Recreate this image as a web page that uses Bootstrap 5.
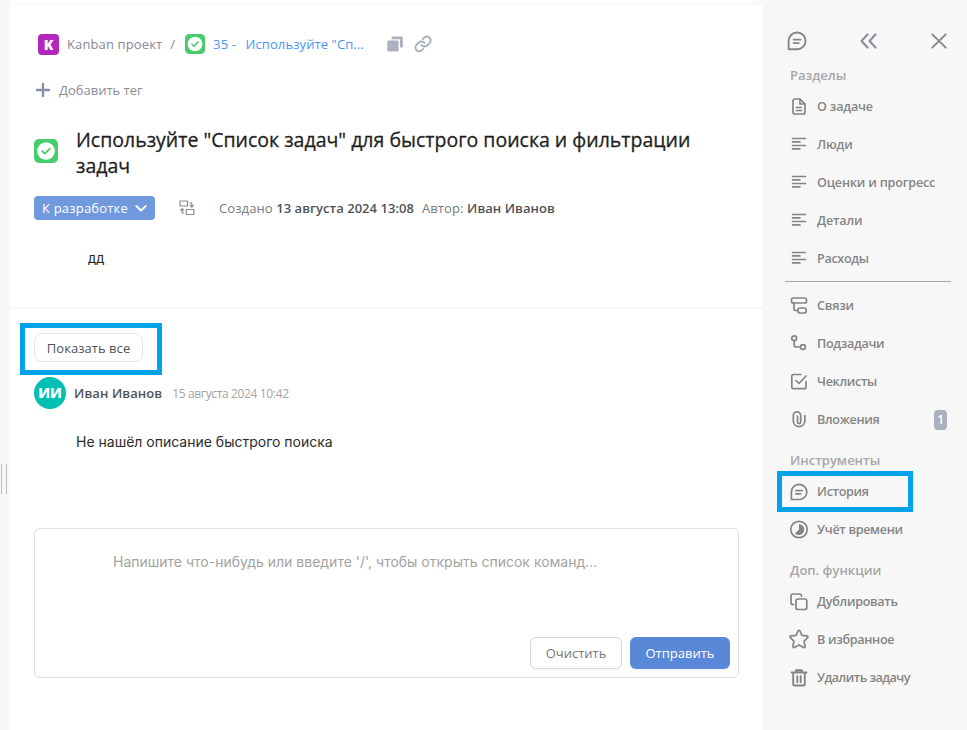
<!DOCTYPE html>
<html lang="ru">
<head>
<meta charset="utf-8">
<meta name="viewport" content="width=device-width, initial-scale=1">
<title>Задача 35</title>
<link href="https://cdn.jsdelivr.net/npm/bootstrap@5.3.0/dist/css/bootstrap.min.css" rel="stylesheet">
<style>
body{background:#f7f7f7;font-family:"Open Sans","Noto Sans",sans-serif;font-size:13px;line-height:20px;color:#8a8c94;height:730px;overflow:hidden}
svg{display:block;flex:none;fill:none;stroke:currentColor;stroke-linecap:round;stroke-linejoin:round}
.app-shell{width:967px;height:730px}
.gutter{width:10px;padding-top:464px;padding-left:1px}
.grip{width:6px;height:30px;border-left:1px solid #bdbdbd;border-right:1px solid #bdbdbd}
.main-col{width:753px}
.top-sliver{height:4px;background:#fff;margin-bottom:1px;width:743px}
.task-pane{height:302px;background:#fff;border-radius:4px;padding:28px 24px 0;margin-bottom:2px}
.feed-pane{height:421px;background:#fff;border-radius:4px 4px 0 0;padding:24px 24px 0}
.crumbs{height:22px;padding-left:4px;color:#85899a}
.proj-badge{width:21px;height:21px;border-radius:4px;background:#b327bd;color:#fff;font:800 14px/21px "Open Sans",sans-serif}
.crumb-proj{letter-spacing:.12px}
.crumb-sep{padding:0 10px 0 8px}
.crumbs a{color:#4a95f7;letter-spacing:.21px}
.crumb-name{margin-left:2px;letter-spacing:.1px}
.ic-pale{color:#abb1bf}
.ic-slate{color:#8a8ea6}
.ic-grey{color:#8c8c8c}
.ic-copy{margin-left:23px}
.ic-link{margin-left:11px}
.add-tag{margin-top:24px;height:22px}
.add-tag span{margin-left:7px}
.title-row{margin-top:25px;height:53px}
.title-row svg{margin-top:-4px}
.task-title{font-size:19.5px;line-height:26px;font-weight:500;color:#1f1f1f;width:640px;margin-left:18px;-webkit-text-stroke:.3px #1f1f1f}
.meta-row{margin-top:17px;height:24px;color:#777a80}
.meta-row b{color:#505258;font-weight:600;letter-spacing:.04px}
.made{letter-spacing:.1px}
.status-btn{width:121px;height:24px;background:#7199de;color:#fff;border-radius:4px;font-size:13px;padding:0 8px;letter-spacing:.2px}
.body-text{margin:28px 0 0 54px;color:#222;font-family:Inter,sans-serif}
.show-btn{width:109px;height:29px;border:1px solid #e6e6e6;border-radius:8px;background:#fff;color:#4f5157;font-size:13px;letter-spacing:.05px}
.author-row{margin-top:15px}
.ava{width:32px;height:32px;background:#00bfb3;color:#fff;font-weight:800;font-size:14px}
.author-name{color:#505258;font-weight:600;font-size:13px;letter-spacing:.09px}
.stamp{color:#a3a3a3;font-size:12px;letter-spacing:-.36px;margin-left:10px;padding-top:1px}
.comment-text{font:14px/20px Inter,sans-serif;color:#2b2b2b;margin:23px 0 0 42px}
.editor{margin-top:76px;width:705px;height:150px;border:1px solid #dfdfdf;border-radius:6px;padding:23px 8px 8px}
.hint{font:14px/20px Inter,sans-serif;color:#a3a3a3;padding-left:70px}
.btn-clear,.btn-send{height:32px;border-radius:6px;font-size:13px;padding:1px 0 0;box-shadow:0 2px 0 #f5f7fa}
.btn-clear{width:92px;border:1px solid #d9d9d9;background:#fff;color:#77787d}
.btn-send{width:100px;background:#5a88d8;color:#fff}
.side-col{width:204px;color:#858585}
.side-head{height:28px;margin-top:27px;padding:0 19px 0 23px}
.ic-fold{margin-left:-1px}
.side-title{height:34px;padding:10px 0 0 27px;font-weight:600;color:#a6a6a6;font-size:13px}
.side-title.first-title{height:32px;padding-top:8px}
.side-item{height:38px;padding:2px 0 0 26px;font-weight:600;font-size:12.6px;letter-spacing:-.18px}
.last-item{padding-bottom:1px}
.side-item svg{width:20px;height:20px;margin-right:8px;stroke-width:1.7}
.tight{letter-spacing:-.53px}
.snug{letter-spacing:-.32px}
.side-rule{margin:4px 16px 4px 22px;height:1px;background:#a6a6a6}
.cnt{width:13px;height:20px;border-radius:4px;background:#abb1bf;color:#fff;margin-right:20px;font-size:12px}
.hl{border:5px solid #00a2e8;pointer-events:none}
.hl-show{left:-14px;top:-10px;width:142px;height:52px}
.hl-hist{left:14px;top:-1px;width:136px;height:41px}
</style>
</head>
<body>
<svg width="0" height="0" class="position-absolute">
<symbol id="i-chat" viewBox="0 0 20 20"><path d="M2.400 17.500V10A7.700 7.600 0 1 1 10 17.500ZM7 8.700h6.200M7 11.900h4.600"/></symbol>
<symbol id="i-lines" viewBox="0 0 20 20"><path d="M3.600 3.500h12.800M3.600 6.900h7.300M3.600 10.500h12.800M3.600 13.900h7.300"/></symbol>
<symbol id="i-done" viewBox="0 0 24 24"><rect width="24" height="24" rx="5" fill="#46cd6b" stroke="none"/><circle cx="12" cy="12" r="8.800" fill="#fff" stroke="none"/><path d="M8.200 12.200l2.600 2.500 5-5" stroke="#46cd6b" stroke-width="1.800"/></symbol>
</svg>
<div class="app-shell d-flex">
<div class="gutter"><div class="grip"></div></div>
<main class="main-col">
<div class="top-sliver"></div>
<section class="task-pane">
<nav class="crumbs d-flex align-items-center text-nowrap">
<span class="proj-badge text-center">K</span><span class="crumb-proj ms-2">Kanban проект</span>
<span class="crumb-sep">/</span>
<svg width="20" height="20"><use href="#i-done"/></svg>
<a class="text-decoration-none ms-2" href="#">35 -&nbsp; <span class="crumb-name">Используйте "Сп...</span></a>
<svg class="ic-pale ic-copy" width="16" height="16" viewBox="0 0 16 16"><g stroke="none" fill="currentColor"><path d="M5.500.5h9a1.300 1.300 0 0 1 1.300 1.300v8.700a1 1 0 0 1-1 1h-1.800V3.300H4.500V1.500a1 1 0 0 1 1-1z"/><rect x=".3" y="4.600" width="11.300" height="10.900" rx="1.300"/></g></svg>
<svg class="ic-pale ic-link" width="18" height="18" viewBox="0 0 24 24" stroke-width="2.600"><path d="M10 13.500a5 5 0 0 0 7.500.5l3.200-3.200a5 5 0 0 0-7.200-7.200L11.600 5.500M14 10.500a5 5 0 0 0-7.500-.5L3.300 13.200a5 5 0 0 0 7.200 7.200L12.300 18.500"/></svg>
</nav>
<div class="add-tag d-flex align-items-center"><svg class="ic-slate" width="18" height="18" viewBox="0 0 18 18" stroke-width="2.400"><path d="M9 3v12M3 9h12"/></svg><span>Добавить тег</span></div>
<div class="title-row d-flex align-items-center"><svg width="24" height="24"><use href="#i-done"/></svg><h1 class="task-title mb-0">Используйте "Список задач" для быстрого поиска и фильтрации<br>задач</h1></div>
<div class="meta-row d-flex align-items-center text-nowrap">
<button class="status-btn border-0 d-flex align-items-center justify-content-between"><span>К разработке</span><svg width="12" height="12" viewBox="0 0 12 12" stroke-width="1.800"><path d="M1.200 4L6 8.500 10.800 4"/></svg></button>
<svg class="ic-grey ms-4" width="16" height="16" viewBox="0 0 16 16" stroke-width="1.200"><path d="M1 1h7.500v5H1zM7.300 9.500h7.500v5H7.300zM10.800 3h2v3.500M11.300 5.500l1.500 1.500 1.500-1.500M4.800 13H3.200V9M1.700 10.200L3.200 8.700l1.500 1.500"/></svg>
<span class="made ms-4">Создано <b>13 августа 2024 13:08</b></span><span class="made ms-2">Автор: <b>Иван Иванов</b></span>
</div>
<div class="body-text">дд</div>
</section>
<section class="feed-pane">
<div class="position-relative"><button class="show-btn p-0 d-block">Показать все</button><div class="hl hl-show position-absolute"></div></div>
<div class="author-row d-flex align-items-center"><span class="ava rounded-circle d-flex align-items-center justify-content-center">ИИ</span><span class="author-name ms-2">Иван Иванов</span><span class="stamp">15 августа 2024 10:42</span></div>
<div class="comment-text">Не нашёл описание быстрого поиска</div>
<div class="editor d-flex flex-column justify-content-between"><div class="hint">Напишите что-нибудь или введите '/', чтобы открыть список команд...</div><div class="d-flex justify-content-end gap-2"><button class="btn btn-clear">Очистить</button><button class="btn btn-send">Отправить</button></div></div>
</section>
</main>
<aside class="side-col text-nowrap">
<div class="side-head d-flex align-items-center justify-content-between"><svg width="22" height="22" stroke-width="1.700"><use href="#i-chat"/></svg><svg class="ic-slate ic-fold" width="18" height="18" viewBox="0 0 18 18" stroke-width="2.200"><path d="M7.500 2.500L1.500 9l6 6.500M15.500 2.500L9.500 9l6 6.500"/></svg><svg width="18" height="18" viewBox="0 0 18 18" stroke-width="1.800"><path d="M2.300 2.300l13.400 13.400M15.700 2.300L2.300 15.700"/></svg></div>
<div class="side-title first-title d-flex align-items-center">Разделы</div>
<div class="side-item d-flex align-items-center"><svg viewBox="0 0 20 20"><path d="M11 2H6a2 2 0 0 0-2 2v11a2 2 0 0 0 2 2h8a2 2 0 0 0 2-2V7L11 2V7h5M7.500 10.500h5M7.500 13.500h5"/></svg>О задаче</div>
<div class="side-item d-flex align-items-center"><svg><use href="#i-lines"/></svg>Люди</div>
<div class="side-item d-flex align-items-center"><svg><use href="#i-lines"/></svg>Оценки и прогресс</div>
<div class="side-item d-flex align-items-center"><svg><use href="#i-lines"/></svg>Детали</div>
<div class="side-item d-flex align-items-center"><svg><use href="#i-lines"/></svg><span class="snug">Расходы</span></div>
<div class="side-rule"></div>
<div class="side-item d-flex align-items-center"><svg viewBox="0 0 20 20"><rect x="2.500" y="2" width="15" height="5" rx="1.800"/><rect x="9" y="12" width="8.200" height="5" rx="2"/><path d="M5 7.200v5.300a2 2 0 0 0 2 2h2"/></svg>Связи</div>
<div class="side-item d-flex align-items-center"><svg viewBox="0 0 20 20"><circle cx="5.200" cy="4.200" r="2.400"/><circle cx="14" cy="13" r="2.400"/><path d="M5.200 6.700v4.300a2 2 0 0 0 2 2h4.200"/></svg><span class="snug">Подзадачи</span></div>
<div class="side-item d-flex align-items-center"><svg viewBox="0 0 20 20"><path d="M12 2.500H4.500a1.700 1.700 0 0 0-1.700 1.700v10.800a1.700 1.700 0 0 0 1.700 1.700h10.800a1.700 1.700 0 0 0 1.700-1.700V9.500M7 8.500l3 3 7-7.500"/></svg><span class="snug">Чеклисты</span></div>
<div class="side-item d-flex align-items-center"><svg viewBox="0 0 20 20"><path d="M8.500 6v6a1.500 1.500 0 0 0 3.200 0V5.500A3.700 3.700 0 0 0 4.300 5.500v6a5.800 5.800 0 0 0 11.500 0V5.500"/></svg><span class="snug">Вложения</span><span class="cnt ms-auto d-flex align-items-center justify-content-center">1</span></div>
<div class="side-title d-flex align-items-center">Инструменты</div>
<div class="position-relative side-item d-flex align-items-center"><svg viewBox="0 0 20 20"><use href="#i-chat"/></svg><span class="snug">История</span><div class="hl hl-hist position-absolute"></div></div>
<div class="side-item d-flex align-items-center"><svg viewBox="0 0 20 20"><circle cx="10" cy="9.500" r="8.200"/><path d="M10 4A5.500 5.500 0 1 1 6 13.500L10 9.500z" fill="currentColor" stroke="none"/></svg><span class="snug">Учёт времени</span></div>
<div class="side-title d-flex align-items-center">Доп. функции</div>
<div class="side-item d-flex align-items-center"><svg viewBox="0 0 20 20"><rect x="7" y="7" width="10.800" height="10.500" rx="2"/><path d="M4.500 12.500H4a2 2 0 0 1-2-2V4a2 2 0 0 1 2-2h6.500a2 2 0 0 1 2 2v.3"/></svg><span class="snug">Дублировать</span></div>
<div class="side-item d-flex align-items-center"><svg viewBox="0 0 20 20" overflow="visible"><path d="M9 1q1-1.500 2 0l1.900 4.400 5 .5q1.700.4.700 1.800l-3.600 3.600 1.100 5q.1 1.700-1.400 1.200L10 14.900 5.300 17.500q-1.500.5-1.400-1.200l1.100-5L1.400 7.700q-1-1.400.7-1.800l5-.5z"/></svg><span class="snug">В избранное</span></div>
<div class="side-item last-item d-flex align-items-center"><svg viewBox="0 0 20 20"><path d="M2.500 4.500h15M7 4.200V2.200h6v2M4.200 4.700v11.500a1.300 1.300 0 0 0 1.300 1.300h9a1.300 1.300 0 0 0 1.300-1.300V4.700M8.300 8.200v6M11.700 8.200v6" stroke-width="1.900"/></svg><span class="tight">Удалить задачу</span></div>
</aside>
</div>
<script src="https://cdn.jsdelivr.net/npm/bootstrap@5.3.0/dist/js/bootstrap.bundle.min.js"></script>
</body>
</html>
